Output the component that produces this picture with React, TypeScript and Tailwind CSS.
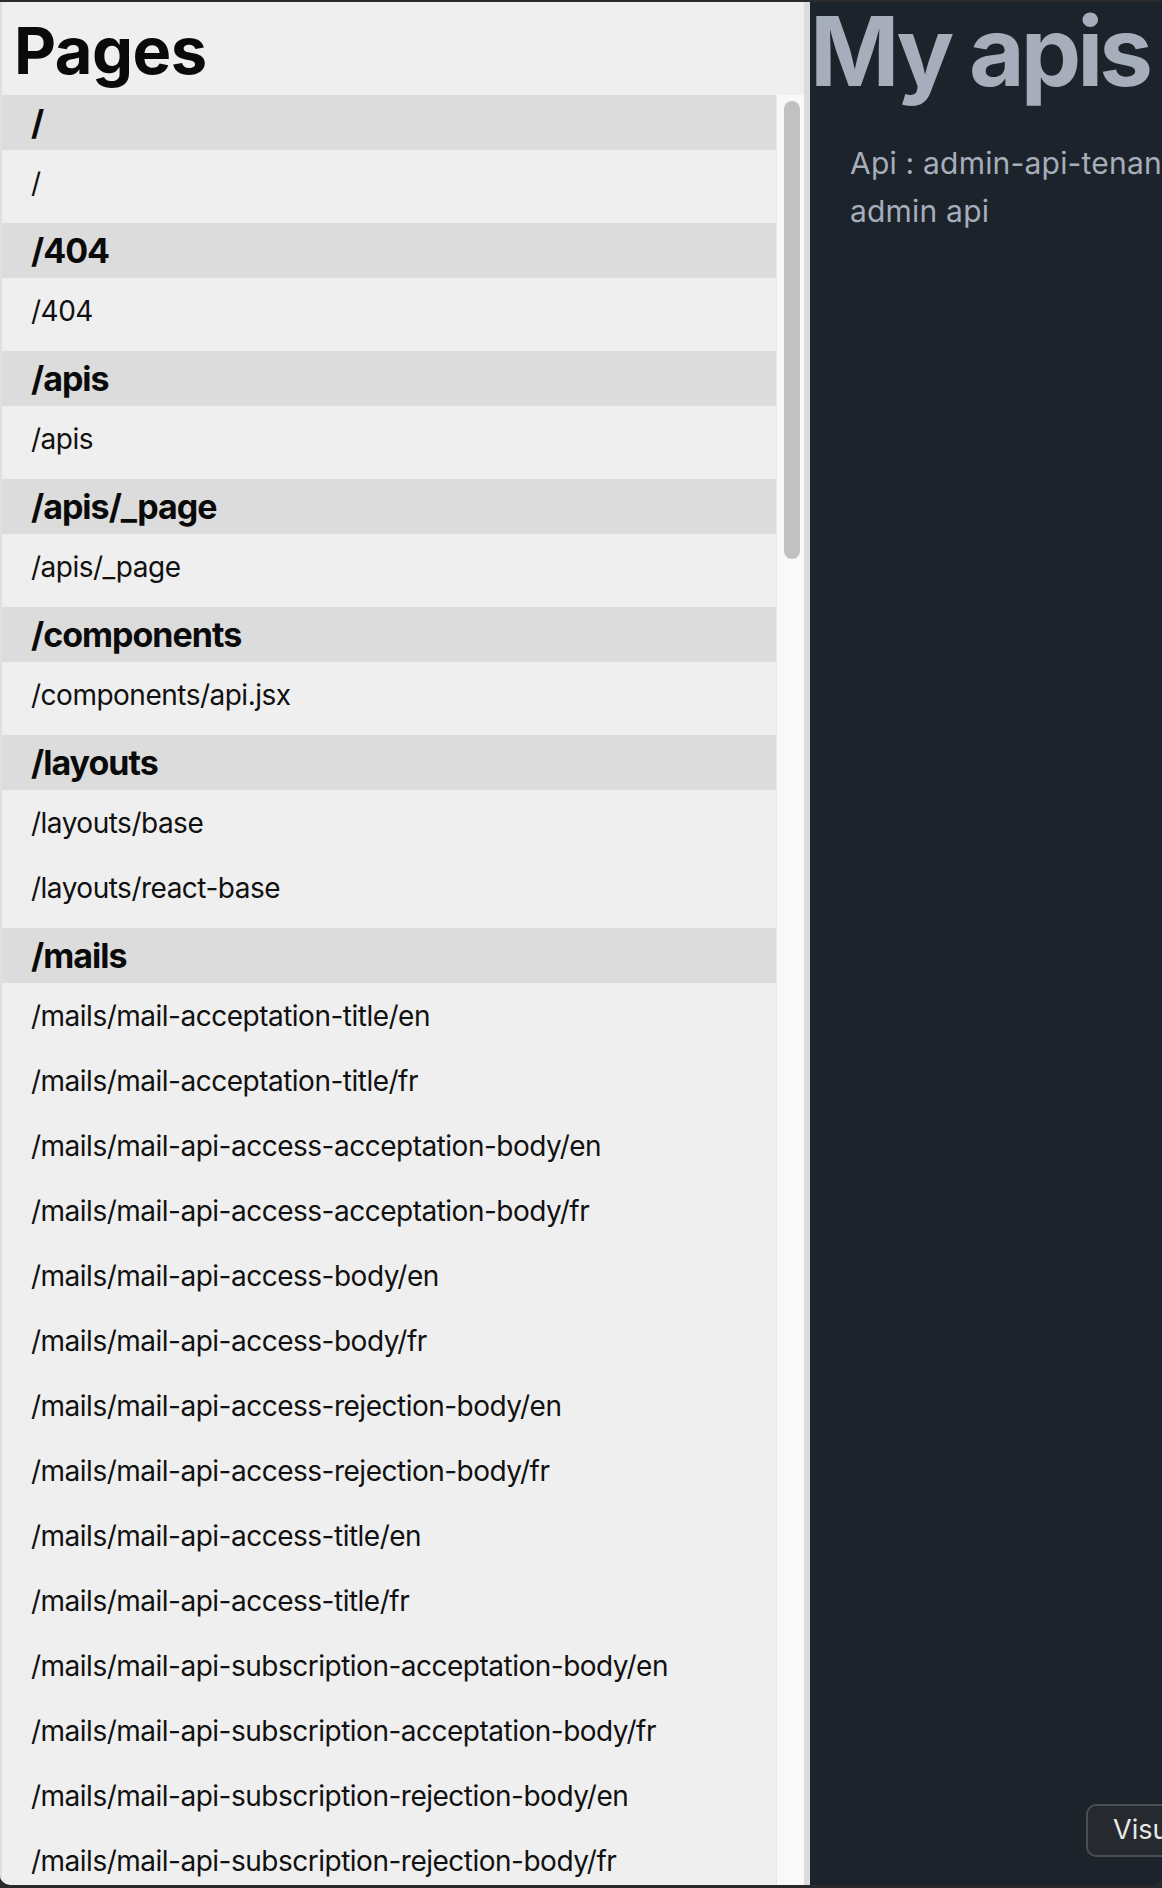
const sections: { title: string; pages: string[] }[] = [
  { title: '/', pages: ['/'] },
  { title: '/404', pages: ['/404'] },
  { title: '/apis', pages: ['/apis'] },
  { title: '/apis/_page', pages: ['/apis/_page'] },
  { title: '/components', pages: ['/components/api.jsx'] },
  { title: '/layouts', pages: ['/layouts/base', '/layouts/react-base'] },
  {
    title: '/mails',
    pages: [
      '/mails/mail-acceptation-title/en',
      '/mails/mail-acceptation-title/fr',
      '/mails/mail-api-access-acceptation-body/en',
      '/mails/mail-api-access-acceptation-body/fr',
      '/mails/mail-api-access-body/en',
      '/mails/mail-api-access-body/fr',
      '/mails/mail-api-access-rejection-body/en',
      '/mails/mail-api-access-rejection-body/fr',
      '/mails/mail-api-access-title/en',
      '/mails/mail-api-access-title/fr',
      '/mails/mail-api-subscription-acceptation-body/en',
      '/mails/mail-api-subscription-acceptation-body/fr',
      '/mails/mail-api-subscription-rejection-body/en',
      '/mails/mail-api-subscription-rejection-body/fr',
      '/mails/mail-api-subscription-title/en',
    ],
  },
]

export default function App() {
  return (
    <div className="h-[1888px] w-[1162px] overflow-hidden bg-[#2a2a2d] pt-[2px] pb-[3px] font-['Inter','Noto_Sans',sans-serif]">
      <div className="flex h-full overflow-hidden rounded-b-[10px]">
        {/* pages sidebar */}
        <aside className="flex w-[804px] shrink-0 flex-col border-l-2 border-[#e0e0e0] bg-[#efefef]">
          <h1 className="h-[93px] shrink-0 pl-[12px] pt-[16px] text-[65px] font-bold leading-none tracking-[-0.5px] text-[#0a0a0a]">
            Pages
          </h1>
          <div className="flex min-h-0 flex-1">
            <div className="min-w-0 flex-1 overflow-hidden">
              {sections.map((s) => (
                <div key={s.title} className="mb-[8px]">
                  <div className="flex h-[55px] items-center bg-[#dcdcdc] px-[29px] text-[34px] font-bold tracking-[-1px] text-[#0a0a0a]">
                    {s.title}
                  </div>
                  {s.pages.map((p) => (
                    <div key={p} className="flex h-[65px] items-center whitespace-nowrap px-[29px] text-[28px] tracking-[-0.5px] text-[#111]">
                      {p}
                    </div>
                  ))}
                </div>
              ))}
            </div>
            <div className="w-[28px] shrink-0 border-l border-[#e6e6e6] bg-[#f9f9f9]">
              <div className="ml-[7px] mt-[6px] h-[458px] w-[16px] rounded-full bg-[#c1c1c1]" />
            </div>
          </div>
        </aside>
        <div className="w-[6px] shrink-0 bg-[#dcdcdc]" />

        {/* content */}
        <main className="flex min-w-0 flex-1 flex-col overflow-hidden bg-[#1d232a] text-[#a6adbb]">
          <h2 className="mt-[1px] whitespace-nowrap text-[96px] font-bold leading-none tracking-[-4px]">My apis</h2>
          <div className="mt-[40px] whitespace-nowrap pl-[40px] text-[30px] leading-[48px] tracking-[0.2px]">
            <p>Api : admin-api-tenant-default</p>
            <p>admin api</p>
          </div>
          <div className="mt-auto mb-[28px] ml-[276px]">
            <button className="h-[53px] whitespace-nowrap rounded-[10px] border-2 border-[#4a4e54] bg-[#26292e] px-[25px] text-[27px] text-[#e8e8e8]">
              Visualiser
            </button>
          </div>
        </main>
      </div>
    </div>
  )
}
